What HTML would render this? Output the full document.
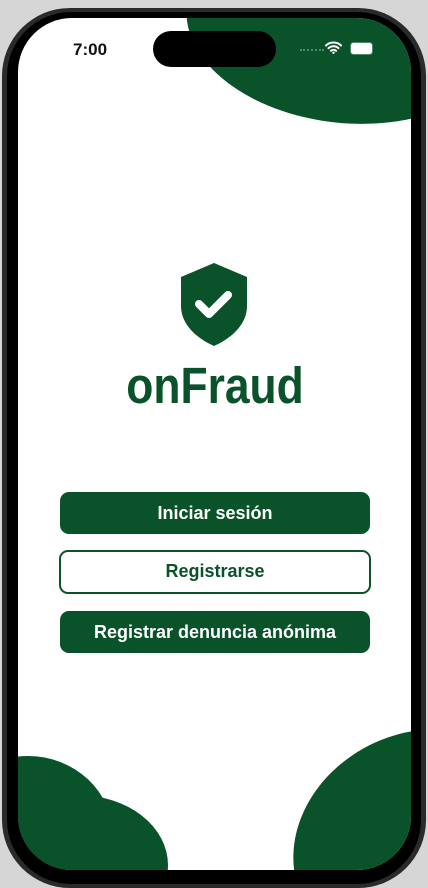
<!DOCTYPE html>
<html><head><meta charset="utf-8"><style>
html,body{margin:0;padding:0;width:428px;height:888px;overflow:hidden;background:#d6d6d6;font-family:"Liberation Sans",sans-serif}
.frame{position:absolute;left:2px;top:8px;width:424px;height:880px;border-radius:68px;background:#2a2a2a}
.frame2{position:absolute;left:7px;top:12px;width:414px;height:872px;border-radius:64px;background:#000}
.screen{position:absolute;left:18px;top:18px;width:393px;height:852px;border-radius:54px;background:#fff;overflow:hidden}
.g{background:#0a5229;position:absolute}
.btn{position:absolute;left:42px;width:310px;height:42px;border-radius:9px;background:#0a5229;color:#fff;font-weight:bold;font-size:18px;text-align:center;line-height:42px}
.btn.o{background:#fff;color:#0a5229;border:2px solid #0a5229;box-sizing:border-box;line-height:39px;left:41px;width:312px;height:44px}
</style></head><body>
<div class="frame"></div><div class="frame2"></div>
<div class="screen">
  <div class="g" style="left:168px;top:-95px;width:320px;height:200px;border-radius:50%;transform:rotate(6deg)"></div>
  <div style="position:absolute;left:55px;top:22px;font-size:17px;font-weight:bold;color:#111">7:00</div>
  <div style="position:absolute;left:135px;top:13px;width:123px;height:36px;border-radius:18px;background:#000"></div>
  <div style="position:absolute;left:282px;top:31px;width:24px;height:2px;border-top:2px dotted #4d8a65"></div>
  <svg style="position:absolute;left:307px;top:23px" width="17" height="13" viewBox="0 0 17 13"><path d="M1 4.5a11 11 0 0 1 15 0M3.5 7.2a7.5 7.5 0 0 1 10 0M6 9.8a3.8 3.8 0 0 1 5 0" stroke="#fff" stroke-width="2" fill="none" stroke-linecap="round"/><circle cx="8.5" cy="11.8" r="1.2" fill="#fff"/></svg>
  <div style="position:absolute;left:332px;top:24px;width:21px;height:11px;border-radius:3.5px;background:#fff;border:1px solid #4d8a65"></div>
  <svg style="position:absolute;left:162px;top:244px" width="68" height="85" viewBox="0 0 68 85"><path d="M34 1 L67 15 L67 44 C67 62 52 76 34 84 C16 76 1 62 1 44 L1 15 Z" fill="#0a5229"/><path d="M19 42 L29 52 L48 33" stroke="#fff" stroke-width="8" fill="none" stroke-linecap="round" stroke-linejoin="round"/></svg>
  <div style="position:absolute;left:0;width:393px;top:338px;text-align:center;font-size:51px;font-weight:bold;color:#0a5229;letter-spacing:0px"><span style="display:inline-block;transform:scaleX(0.87)">onFraud</span></div>
  <div class="btn" style="top:474px">Iniciar sesión</div>
  <div class="btn o" style="top:532px">Registrarse</div>
  <div class="btn" style="top:593px">Registrar denuncia anónima</div>
  <div class="g" style="left:-75px;top:738px;width:170px;height:160px;border-radius:50%"></div>
  <div class="g" style="left:-30px;top:777px;width:180px;height:140px;border-radius:50%"></div>
  <div class="g" style="left:272px;top:715px;width:260px;height:220px;border-radius:50%;transform:rotate(-25deg)"></div>
</div>
</body></html>
